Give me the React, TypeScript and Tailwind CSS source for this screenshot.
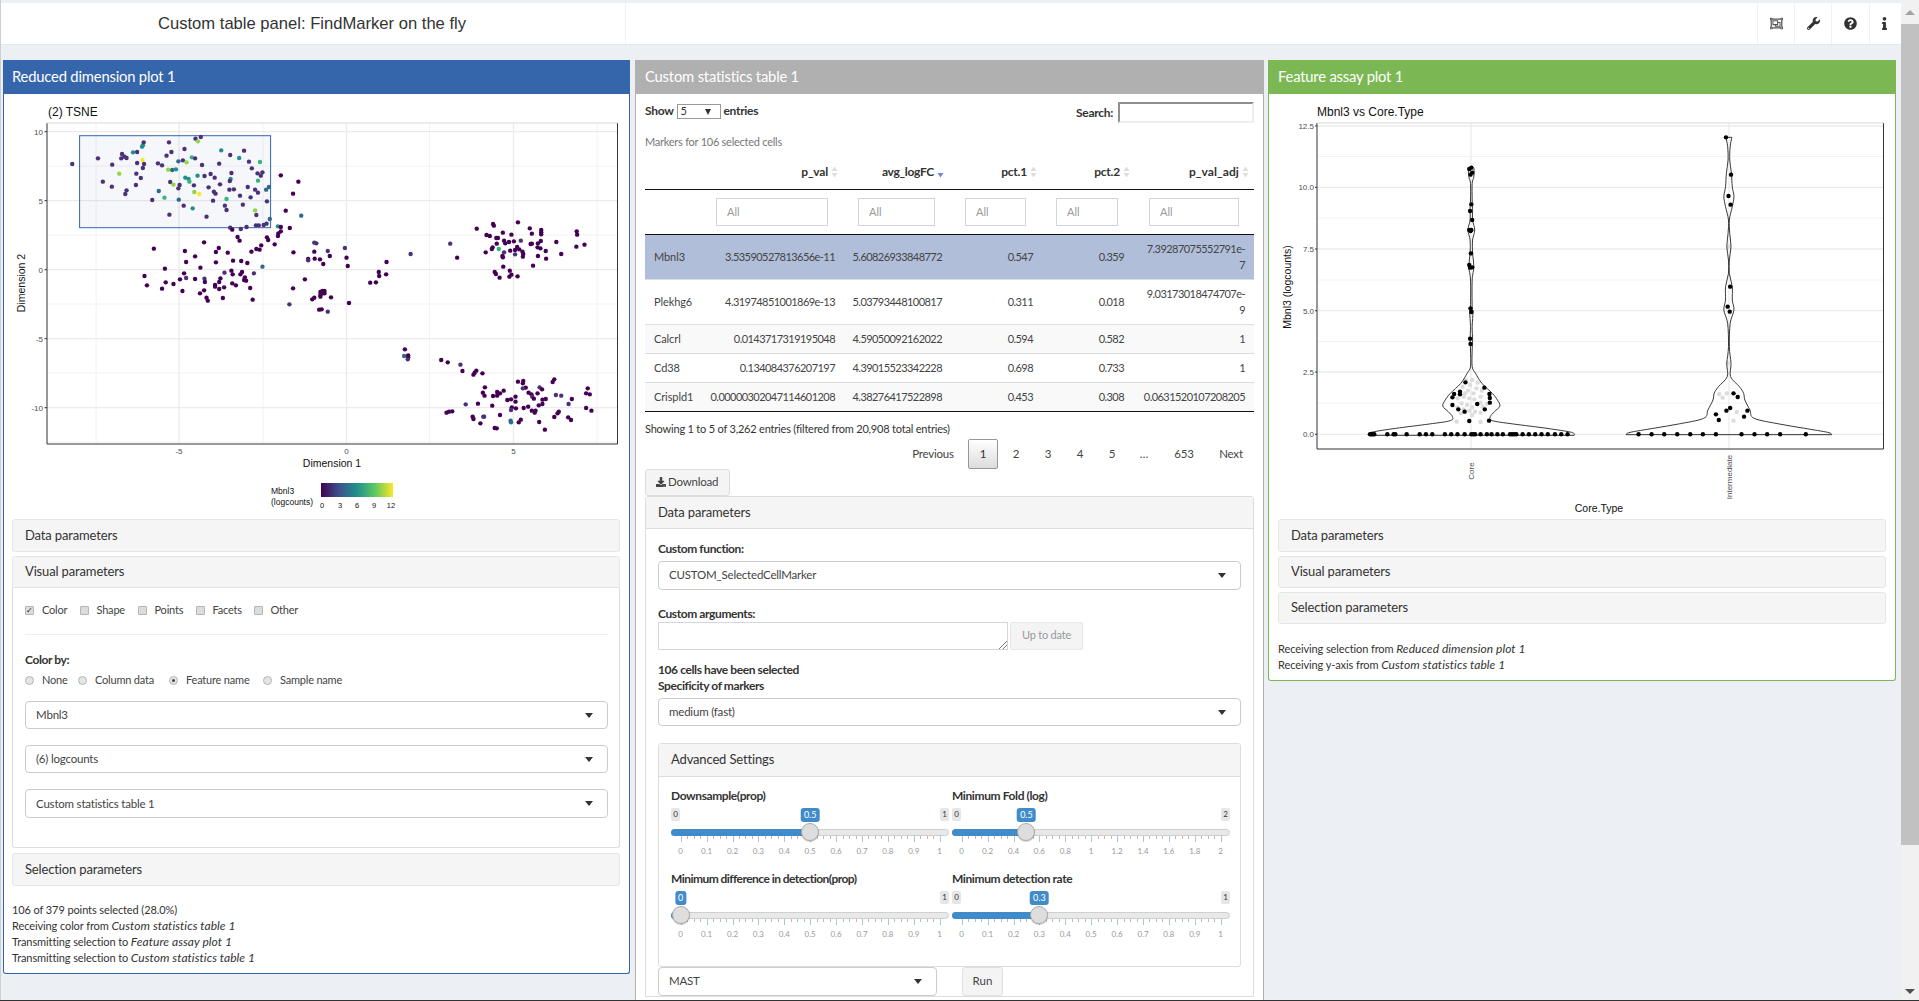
import { FaDownload, FaInfo, FaQuestionCircle, FaRegObjectGroup, FaWrench } from 'react-icons/fa';

const viridis = ['#440154', '#4b3178', '#31688e', '#21908c', '#35b779', '#90d743', '#fde725'];

// scatter points, as [x, y, colour index] read off the reference at 2.45x / 3x
const scatter: number[][] = [
  [177,492,1],[240,475,1],[275,494,1],[299,462,1],[297,475,1],[305,470,1],[310,474,1],[336,456,1],[326,457,3],[348,440,3],[350,436,3],[352,427,1],[336,489,1],[349,480,6],[353,492,1],[350,504,1],[292,521,5],[334,521,1],[345,534,1],[252,545,1],[274,560,1],[310,571,1],[307,582,1],[333,555,1],[373,600,1],[389,573,2],[403,593,4],[387,490,1],[397,496,1],[414,427,1],[408,467,1],[420,456,1],[452,447,1],[479,416,1],[492,411,1],[485,424,5],[437,484,2],[448,481,1],[457,487,5],[470,472,4],[478,475,1],[412,509,5],[422,510,2],[431,508,3],[495,495,1],[537,491,1],[542,451,3],[564,465,1],[586,474,3],[598,452,1],[610,485,1],[617,505,1],[637,486,4],[631,520,1],[643,517,1],[639,527,1],[632,542,4],[567,519,1],[565,537,3],[563,543,1],[516,522,1],[526,533,1],[501,528,1],[484,527,3],[454,533,3],[462,537,3],[464,545,4],[417,546,1],[425,554,5],[440,555,1],[437,565,1],[475,556,1],[511,562,1],[539,553,1],[562,569,1],[573,568,1],[607,561,1],[625,569,1],[632,578,1],[652,569,2],[659,561,2],[476,576,5],[488,582,6],[524,575,1],[528,581,1],[522,602,1],[555,597,4],[588,587,1],[614,592,1],[654,604,1],[438,599,2],[450,617,1],[472,625,3],[415,644,1],[506,650,1],[551,617,1],[555,630,1],[595,614,1],[625,631,5],[628,645,1],[627,676,1],[634,676,1],[646,675,1],[653,671,1],[661,657,2],[604,681,1],[564,683,1],[590,687,1],[681,679,3],
  [688,526,0],[731,545,0],[718,581,0],[700,632,0],[738,647,2],[688,681,0],[710,684,0],[569,689,0],[688,694,0],[682,700,0],[681,708,0],[654,712,0],[657,720,0],[582,711,0],[587,722,0],[500,727,0],[673,733,0],[640,736,0],[636,749,0],[628,747,0],[616,755,0],[536,744,0],[529,756,0],[558,758,0],[377,746,0],[453,753,0],[478,769,0],[456,786,0],[529,787,0],[571,782,0],[591,783,0],[606,789,0],[643,800,2],[491,803,0],[404,806,0],[451,820,0],[456,834,1],[441,838,0],[478,837,0],[501,836,1],[502,846,0],[540,835,0],[537,846,0],[527,855,0],[527,860,0],[537,867,0],[549,862,0],[567,812,0],[570,823,0],[550,818,1],[593,816,0],[589,823,0],[600,832,0],[603,842,0],[598,840,0],[622,820,1],[569,850,0],[578,856,0],[613,864,0],[354,828,0],[360,856,0],[397,866,0],[406,847,0],[425,852,0],[447,873,0],[490,880,0],[500,871,0],[506,893,0],[509,902,0],[546,894,0],[619,899,0],
  [719,757,0],[770,728,1],[775,730,1],[770,755,0],[755,777,0],[755,781,1],[771,776,0],[784,778,0],[792,792,0],[803,753,1],[808,768,0],[845,744,1],[849,773,0],[852,798,0],[747,838,0],[718,865,0],[709,913,1],[790,873,0],[795,873,0],[785,876,0],[790,880,0],[785,885,0],[795,880,0],[785,890,0],[770,893,0],[765,898,0],[811,892,0],[782,929,0],[788,928,0],[803,935,1],[855,909,0],[907,848,0],[921,847,0],[928,816,0],[929,828,0],[946,823,0],[947,786,0],[1006,762,1],[1103,731,1],[1120,773,0],
  [1168,686,0],[1208,672,0],[1210,677,0],[1269,667,0],[1298,685,0],[1326,690,0],[1326,697,0],[1326,703,0],[1303,701,0],[1232,698,0],[1253,704,0],[1192,705,0],[1200,708,0],[1216,714,0],[1220,714,0],[1413,694,0],[1414,704,0],[1363,726,0],[1432,734,0],[1412,740,0],[1375,762,0],[1190,757,0],[1205,747,0],[1207,742,0],[1217,731,0],[1222,747,4],[1235,722,0],[1238,730,0],[1247,726,0],[1259,724,0],[1276,722,1],[1300,732,0],[1303,731,0],[1318,730,0],[1325,723,0],[1317,742,0],[1324,745,0],[1337,753,0],[1235,757,1],[1250,752,0],[1262,750,0],[1267,741,0],[1272,748,0],[1280,755,0],[1282,762,0],[1281,770,0],[1262,763,1],[1231,768,0],[1232,772,0],[1318,768,0],[1338,776,0],[1306,797,0],[1233,800,0],[1249,812,0],[1212,816,0],[1215,822,0],[1224,833,0],[1253,824,0],[1248,830,0],[1268,829,0],
  [992,1048,0],[990,1068,2],[1000,1066,0],[1000,1072,0],[999,1078,1],[1081,1080,0],[1097,1087,0],[1128,1094,1],[1133,1113,0],[1167,1112,0],[1163,1118,0],[1160,1124,0],[1182,1120,0],[1188,1162,0],[1183,1178,0],[1187,1187,0],[1208,1188,0],[1218,1176,0],[1218,1187,0],[1225,1180,0],[1234,1172,0],[1269,1145,0],[1282,1143,0],[1281,1150,0],[1288,1163,0],[1281,1165,1],[1322,1162,1],[1328,1168,0],[1358,1138,0],[1354,1146,0],[1440,1165,0],[1436,1180,0],[1445,1183,0],[1295,1178,0],[1302,1183,0],[1304,1190,1],[1317,1180,0],[1308,1196,0],[1243,1200,0],[1252,1198,0],[1263,1190,0],[1263,1205,0],[1329,1199,0],[1337,1197,0],[1362,1185,1],[1375,1187,1],[1401,1197,0],[1393,1212,1],[1141,1213,1],[1171,1211,0],[1206,1217,0],[1254,1222,0],[1264,1225,0],[1252,1230,1],[1283,1224,0],[1294,1220,0],[1320,1216,0],[1329,1212,0],[1303,1232,0],[1312,1232,0],[1310,1238,0],[1436,1224,0],[1449,1232,0],[1094,1238,0],[1100,1235,0],[1108,1234,0],[1158,1250,0],[1160,1257,0],[1186,1250,1],[1184,1250,1],[1225,1245,0],[1251,1262,2],[1252,1267,2],[1271,1267,0],[1276,1259,0],[1321,1266,0],[1358,1251,0],[1366,1240,0],[1369,1235,0],[1392,1252,0],[1399,1260,0],[1177,1270,0],[1212,1284,0],[1217,1285,0],[1335,1289,0],
];

const coreShape = [[500,0],[505,6],[530,6],[550,2],[600,2],[625,3],[660,3],[690,8],[720,3],[760,3],[800,6],[840,2],[920,2],[935,4],[980,2],[1020,3],[1050,2],[1100,2],[1120,10],[1150,25],[1180,50],[1200,62],[1218,68],[1235,55],[1250,45],[1262,50],[1272,100],[1285,180],[1296,235],[1302,245],[1306,245]];
const interShape = [[412,7],[440,3],[480,2],[520,6],[560,8],[590,12],[620,8],[660,1],[700,2],[740,5],[780,1],[820,1],[860,8],[900,8],[930,12],[970,3],[1040,1],[1090,5],[1130,4],[1160,25],[1180,35],[1200,38],[1230,50],[1255,60],[1272,120],[1285,180],[1297,235],[1304,245]];

const coreDots = [[503,503],[498,507],[505,518],[501,524],[503,613],[500,633],[505,660],[498,690],[503,690],[501,693],[502,760],[498,795],[505,802],[500,803],[501,925],[503,936],[500,1016],[501,1032],[489,1147],[534,1163],[476,1175],[476,1183],[462,1182],[458,1192],[546,1182],[547,1194],[547,1208],[458,1215],[472,1228],[487,1235],[517,1212],[535,1228],[498,1263],[545,1262]];
const coreZeros = [262,265,268,272,303,318,322,349,380,395,410,440,455,470,487,503,508,512,525,540,551,565,578,595,600,605,610,625,640,655,670,685,702,717,732];
const coreLight = [[490,1140],[505,1140],[518,1148],[500,1155],[482,1160],[515,1165],[528,1172],[495,1172],[508,1180],[470,1195],[485,1190],[525,1190],[498,1195],[510,1198],[480,1210],[493,1215],[505,1222],[525,1208],[540,1212],[470,1222],[485,1228],[498,1232],[512,1235],[525,1238],[478,1240],[505,1245],[468,1265],[525,1266],[530,1220],[488,1180]];
const interDots = [[1109,412],[1121,524],[1115,588],[1120,614],[1119,860],[1113,920],[1118,935],[1127,1180],[1137,1191],[1160,1232],[1119,1224],[1110,1232],[1085,1243],[1152,1250],[1092,1260]];
const interZeros = [901,932,962,993,1024,1054,1085,1146,1177,1207,1238,1299];
const interLight = [[1093,1182],[1101,1193],[1111,1180],[1135,1236],[1127,1262],[1113,1090],[1116,740]];

// one side of the outline, smoothed with catmull-rom
const smoothSide = (pts: number[][]) => {
  let d = '';
  for (let i = 0; i < pts.length - 1; i++) {
    const p0 = pts[i - 1] || pts[i];
    const p1 = pts[i];
    const p2 = pts[i + 1];
    const p3 = pts[i + 2] || p2;
    d += `C${p1[0] + (p2[0] - p0[0]) / 6} ${p1[1] + (p2[1] - p0[1]) / 6} ${p2[0] - (p3[0] - p1[0]) / 6} ${p2[1] - (p3[1] - p1[1]) / 6} ${p2[0]} ${p2[1]}`;
  }
  return d;
};

const violinPath = (cx: number, rows: number[][]) => {
  const toPage = ([x, y]: number[]) => [1260 + x / 2.38, y / 3];
  const right = rows.map(([y, w]) => toPage([cx + w, y]));
  const left = [...rows].reverse().map(([y, w]) => toPage([cx - w, y]));
  return `M${right[0][0]} ${right[0][1]}${smoothSide(right)}L${left[0][0]} ${left[0][1]}${smoothSide(left)}Z`;
};

const ScatterPlot = () => {
  const xs = [179, 346.5, 513.5];
  const xMinor = [96, 263, 429.5, 597];
  const ys = [131.7, 200.7, 269.7, 338.7, 407.7];
  const yMinor = [166, 235, 304, 373, 442];
  return (
    <svg width={625} height={424} className="block font-['Liberation_Sans',sans-serif]">
      <defs>
        <linearGradient id="vir">
          <stop offset="0" stopColor="#440154" />
          <stop offset="0.25" stopColor="#3b528b" />
          <stop offset="0.5" stopColor="#21908c" />
          <stop offset="0.75" stopColor="#5dc963" />
          <stop offset="1" stopColor="#fde725" />
        </linearGradient>
      </defs>
      <g transform="translate(-4,-94)">
        <text x={48} y={116} fontSize={12} fill="#111">(2) TSNE</text>
        {xMinor.map(x => <line key={x} x1={x} x2={x} y1={123} y2={444} stroke="#f2f2f2" />)}
        {yMinor.map(y => <line key={y} x1={47} x2={617} y1={y} y2={y} stroke="#f2f2f2" />)}
        {xs.map(x => <line key={x} x1={x} x2={x} y1={123} y2={444} stroke="#ebebeb" strokeWidth={1.3} />)}
        {ys.map(y => <line key={y} x1={47} x2={617} y1={y} y2={y} stroke="#ebebeb" strokeWidth={1.3} />)}
        <path d="M47 123V444H617.5V123" fill="none" stroke="#333" strokeWidth={1} />
        <path d="M47 123H617.5" stroke="#d9d9d9" />
        {[[179, '-5'], [346.5, '0'], [513.5, '5']].map(([x, t]) => (
          <text key={t} x={x} y={454} fontSize={8} textAnchor="middle" fill="#4d4d4d">{t}</text>
        ))}
        {['10', '5', '0', '-5', '-10'].map((t, i) => (
          <g key={t}>
            <text x={43} y={ys[i] + 3} fontSize={8} textAnchor="end" fill="#4d4d4d">{t}</text>
            <line x1={44.5} x2={47} y1={ys[i]} y2={ys[i]} stroke="#333" />
          </g>
        ))}
        <text x={332} y={467} fontSize={10.5} textAnchor="middle" fill="#111">Dimension 1</text>
        <text transform="translate(25,283) rotate(-90)" fontSize={10.5} textAnchor="middle" fill="#111">Dimension 2</text>
        <rect x={79.6} y={135.7} width={191} height={92} fill="#3565aa" fillOpacity={0.05} stroke="#3565aa" strokeWidth={1} />
        {scatter.map(([x, y, c], i) => <circle key={i} cx={x / 2.45} cy={y / 3} r={2.2} fill={viridis[c]} />)}
        <text x={271} y={494} fontSize={8.5} fill="#111">Mbnl3</text>
        <text x={271} y={505} fontSize={8.5} fill="#111">(logcounts)</text>
        <rect x={321} y={483} width={72} height={14} fill="url(#vir)" />
        {[[322, '0'], [340, '3'], [357, '6'], [374, '9'], [391, '12']].map(([x, t]) => (
          <text key={t} x={x} y={508} fontSize={7.5} textAnchor="middle" fill="#111">{t}</text>
        ))}
      </g>
    </svg>
  );
};

const ViolinPlot = () => {
  const vx = (x: number) => 1260 + x / 2.38;
  const ys = [126, 187.3, 249, 310.7, 372, 434.3];
  const yMinor = [156.5, 218, 280, 341.5, 403];
  return (
    <svg width={626} height={424} className="block font-['Liberation_Sans',sans-serif]">
      <g transform="translate(-1269,-94)">
        <text x={1317} y={116} fontSize={12} fill="#111">Mbnl3 vs Core.Type</text>
        {yMinor.map(y => <line key={y} x1={1317} x2={1883} y1={y} y2={y} stroke="#f2f2f2" />)}
        {ys.map(y => <line key={y} x1={1317} x2={1883} y1={y} y2={y} stroke="#ebebeb" strokeWidth={1.3} />)}
        {[1471, 1729].map(x => <line key={x} x1={x} x2={x} y1={123} y2={449} stroke="#ebebeb" strokeWidth={1.3} />)}
        <path d="M1317 123V449H1883.5V123" fill="none" stroke="#333" />
        <path d="M1317 123H1883.5" stroke="#d9d9d9" />
        {['12.5', '10.0', '7.5', '5.0', '2.5', '0.0'].map((t, i) => (
          <g key={t}>
            <text x={1314} y={ys[i] + 3} fontSize={8} textAnchor="end" fill="#4d4d4d">{t}</text>
            <line x1={1315} x2={1317} y1={ys[i]} y2={ys[i]} stroke="#333" />
          </g>
        ))}
        {coreLight.concat(interLight).map(([x, y], i) => <circle key={i} cx={vx(x)} cy={y / 3} r={2.2} fill="#dcdcdc" />)}
        <path d={violinPath(503, coreShape)} fill="none" stroke="#222" strokeWidth={0.9} />
        <path d={violinPath(1116, interShape)} fill="none" stroke="#222" strokeWidth={0.9} />
        {coreDots.concat(interDots).map(([x, y], i) => <circle key={i} cx={vx(x)} cy={y / 3} r={2.2} fill="#000" />)}
        {coreZeros.concat(interZeros).map((x, i) => <circle key={i} cx={vx(x)} cy={434.3} r={2.2} fill="#000" />)}
        <text transform="translate(1474,471) rotate(-90)" fontSize={8} textAnchor="middle" fill="#4d4d4d">Core</text>
        <text transform="translate(1732,477) rotate(-90)" fontSize={8} textAnchor="middle" fill="#4d4d4d">Intermediate</text>
        <text x={1599} y={512} fontSize={10.5} textAnchor="middle" fill="#111">Core.Type</text>
        <text transform="translate(1291,287) rotate(-90)" fontSize={10.5} textAnchor="middle" fill="#111">Mbnl3 (logcounts)</text>
      </g>
    </svg>
  );
};

const Accordion = ({ title, className = '' }: { title: string; className?: string }) => (
  <div className={`flex items-center pl-[12px] bg-[#f5f5f5] border border-[#e6e6e6] rounded-[3px] text-[13px] text-[#333] tracking-[-0.15px] ${className}`}>
    {title}
  </div>
);

const SelectBox = ({ value, className = '' }: { value: string; className?: string }) => (
  <div className={`relative flex items-center pl-[10px] bg-white border border-[#ccc] rounded-[4px] text-[11.5px] text-[#444] tracking-[-0.2px] ${className}`}>
    {value}
    <span className="absolute right-[14px] top-[11px] w-0 h-0 border-l-[4px] border-r-[4px] border-t-[5px] border-l-transparent border-r-transparent border-t-[#333]" />
  </div>
);

const Check = ({ label, checked = false, className = '' }: { label: string; checked?: boolean; className?: string }) => (
  <div className={`flex items-center gap-[8px] text-[11px] text-[#444] tracking-[-0.2px] ${className}`}>
    <span className="flex items-center justify-center w-[9px] h-[9px] bg-[#dcdcdc] border border-[#b5b5b5] rounded-[1px] text-[8px] leading-none text-[#222]">
      {checked ? '✓' : ''}
    </span>
    {label}
  </div>
);

const Radio = ({ label, checked = false, className = '' }: { label: string; checked?: boolean; className?: string }) => (
  <div className={`flex items-center gap-[8px] text-[11px] text-[#444] tracking-[-0.2px] ${className}`}>
    <span className="flex items-center justify-center w-[9px] h-[9px] bg-[#e4e4e4] border border-[#b5b5b5] rounded-full">
      {checked ? <span className="w-[3px] h-[3px] rounded-full bg-[#444]" /> : null}
    </span>
    {label}
  </div>
);

const tdPad = [
  'pl-[9px] text-left tracking-[-0.1px]',
  'pr-[13px] text-right tracking-[-0.55px]',
  'pr-[13px] text-right tracking-[-0.55px]',
  'pr-[13px] text-right tracking-[-0.55px]',
  'pr-[15px] text-right tracking-[-0.55px]',
  'pr-[9px] text-right tracking-[-0.55px]',
];

const rows = [
  { h: 'h-[45px]', bg: 'bg-[#b0bed9]', c: ['Mbnl3', '3.53590527813656e-11', '5.60826933848772', '0.547', '0.359', '7.39287075552791e-\n7'] },
  { h: 'h-[45px]', bg: 'bg-white', c: ['Plekhg6', '4.31974851001869e-13', '5.03793448100817', '0.311', '0.018', '9.03173018474707e-\n9'] },
  { h: 'h-[29px]', bg: 'bg-[#f9f9f9]', c: ['Calcrl', '0.0143717319195048', '4.59050092162022', '0.594', '0.582', '1'] },
  { h: 'h-[29px]', bg: 'bg-white', c: ['Cd38', '0.134084376207197', '4.39015523342228', '0.698', '0.733', '1'] },
  { h: 'h-[29px]', bg: 'bg-[#f9f9f9]', c: ['Crispld1', '0.00000302047114601208', '4.38276417522898', '0.453', '0.308', '0.0631520107208205'] },
];

const SortIcon = ({ active = false }: { active?: boolean }) => (
  <svg width={7} height={12} viewBox="0 0 7 12" className="ml-[3px]">
    {active ? null : <path d="M3.5 0.5L6.5 5H0.5Z" fill="#dedede" />}
    <path d="M3.5 11.5L6.5 7H0.5Z" fill={active ? '#7a83d8' : '#dedede'} />
  </svg>
);

const StatsTable = () => {
  const heads = [
    { t: 'p_val', pr: 'pr-[10px] tracking-[-0.2px]' },
    { t: 'avg_logFC', pr: 'pr-[11px] tracking-[-0.3px]', active: true },
    { t: 'pct.1', pr: 'pr-[9px] tracking-[-0.2px]' },
    { t: 'pct.2', pr: 'pr-[9px] tracking-[-0.2px]' },
    { t: 'p_val_adj', pr: 'pr-[5px] tracking-[0.1px]' },
  ];
  const filters = ['w-[112px]', 'w-[77px]', 'w-[61px]', 'w-[62px]', 'w-[90px]'];
  return (
    <table className="w-[609px] table-fixed border-collapse text-[11px] text-[#444]">
      <colgroup>
        <col className="w-[61px]" />
        <col className="w-[142px]" />
        <col className="w-[107px]" />
        <col className="w-[91px]" />
        <col className="w-[93px]" />
        <col className="w-[115px]" />
      </colgroup>
      <thead>
        <tr className="h-[34px] border-b-[1.5px] border-[#111]">
          <th />
          {heads.map(h => (
            <th key={h.t} className={`font-bold text-[12px] text-[#333] ${h.pr}`}>
              <span className="flex items-center justify-end">
                {h.t}
                <SortIcon active={h.active} />
              </span>
            </th>
          ))}
        </tr>
        <tr className="h-[45px] border-b-[1.5px] border-[#111]">
          <td />
          {filters.map((w, i) => (
            <td key={i} className="pl-[10px]">
              <input
                placeholder="All"
                className={`${w} h-[28px] pl-[10px] border border-[#cfd5e0] bg-white text-[11px] placeholder:text-[#999] outline-none`}
              />
            </td>
          ))}
        </tr>
      </thead>
      <tbody>
        {rows.map((r, ri) => (
          <tr key={r.c[0]} className={`${r.h} ${r.bg} ${ri > 0 ? 'border-t border-[#ddd]' : ''} ${ri === 4 ? 'border-b-[1.5px] border-b-[#111]' : ''}`}>
            {r.c.map((v, i) => (
              <td key={i} className={`whitespace-pre-line leading-[16px] ${tdPad[i]}`}>{v}</td>
            ))}
          </tr>
        ))}
      </tbody>
    </table>
  );
};

const Pagination = () => {
  const items = [
    { t: 'Previous', w: 'w-[62px] mr-[4px]' },
    { t: '1', w: 'w-[30px] mr-[2px] border border-[#979797] rounded-[2px] bg-[linear-gradient(#fff,#dcdcdc)] text-[#333]' },
    { t: '2', w: 'w-[32px]' },
    { t: '3', w: 'w-[32px]' },
    { t: '4', w: 'w-[32px]' },
    { t: '5', w: 'w-[32px]' },
    { t: '…', w: 'w-[32px]' },
    { t: '653', w: 'w-[48px]' },
    { t: 'Next', w: 'w-[46px]' },
  ];
  return (
    <div className="flex justify-end h-[30px] mt-[2px] text-[11.5px] text-[#444] tracking-[-0.2px]">
      {items.map(i => <div key={i.t} className={`flex items-center justify-center ${i.w}`}>{i.t}</div>)}
    </div>
  );
};

const Slider = ({ value, max, labels, label, className = '' }: { value: number; max: number; labels: string[]; label: string; className?: string }) => {
  const from = 9.7;
  const span = 259;
  const pos = from + (value / max) * span;
  const ticks = Array.from({ length: (labels.length - 1) * 4 + 1 }, (_, i) => i);
  return (
    <div className={`relative h-[56px] w-[278px] ${className}`}>
      {value > 0 ? (
        <span className="absolute left-0 top-[2px] flex items-center justify-center w-[9px] h-[13px] bg-[#e6e6e6] rounded-[2px] text-[8px] text-[#333]">0</span>
      ) : null}
      <span className="absolute right-0 top-[2px] flex items-center justify-center w-[9px] h-[13px] bg-[#e6e6e6] rounded-[2px] text-[8px] text-[#333]">{max}</span>
      <div className="absolute left-0 right-0 top-[23px] h-[7px] bg-[#e8e8e8] border border-[#cfcfcf] rounded-[4px]" />
      <div className="absolute left-0 top-[23px] h-[7px] bg-[#428bca] rounded-l-[4px]" style={{ width: pos }} />
      {ticks.map(i => {
        const x = from + (i / (ticks.length - 1)) * span;
        const major = i % 4 === 0;
        return (
          <span
            key={i}
            className={major ? 'absolute top-[30px] w-px h-[6px] bg-[#a9c5de]' : 'absolute top-[30px] w-px h-[3px] bg-[#bbb]'}
            style={{ left: x }}
          />
        );
      })}
      {labels.map((t, i) => (
        <span
          key={i}
          className="absolute top-[40px] w-[20px] -ml-[10px] text-center text-[8px] leading-[10px] text-[#999]"
          style={{ left: from + i * 25.9 }}
        >
          {t}
        </span>
      ))}
      <span
        className="absolute top-[2px] -translate-x-1/2 flex items-center justify-center h-[14px] px-[3px] bg-[#428bca] rounded-[3px] text-[9px] text-white"
        style={{ left: pos }}
      >
        {label}
      </span>
      <span className="absolute top-[17px] w-[18px] h-[18px] -ml-[9px] rounded-full bg-[#dedede] border border-[#ababab] shadow-[0_1px_1px_rgba(0,0,0,0.2)]" style={{ left: pos }} />
    </div>
  );
};

const tenths = ['0', '0.1', '0.2', '0.3', '0.4', '0.5', '0.6', '0.7', '0.8', '0.9', '1'];
const fifths = ['0', '0.2', '0.4', '0.6', '0.8', '1', '1.2', '1.4', '1.6', '1.8', '2'];

const fieldLabel = 'h-[16px] leading-[16px] text-[12px] font-bold text-[#333] tracking-[-0.4px]';

const StatusLine = ({ lead, em }: { lead: string; em?: string }) => (
  <div>
    {lead}
    {em ? <em className="text-[12px] tracking-[0.05px]">{em}</em> : null}
  </div>
);

const LeftPanel = () => (
  <div className="w-[627px] h-[914px] bg-white border-x border-b border-[#3565aa] rounded-b-[3px] shrink-0">
    <div className="flex items-center h-[34px] -mx-px pl-[9px] pb-[2px] bg-[#3565aa] text-white text-[14.8px] tracking-[-0.2px]">Reduced dimension plot 1</div>
    <ScatterPlot />
    <div className="pl-[8px] pr-[9px]">
      <Accordion title="Data parameters" className="h-[33px] mt-px" />
      <div className="mt-[4px]">
        <Accordion title="Visual parameters" className="rounded-b-none h-[32px]" />
        <div className="h-[260px] border border-t-0 border-[#ddd] rounded-b-[3px] pl-[12px] pr-[11px]">
          <div className="flex items-center h-[44px]">
            <Check label="Color" checked className="w-[54.5px]" />
            <Check label="Shape" className="w-[58px]" />
            <Check label="Points" className="w-[58px]" />
            <Check label="Facets" className="w-[58px]" />
            <Check label="Other" />
          </div>
          <hr className="mt-[2px] border-[#eee]" />
          <div className={`mt-[17px] ${fieldLabel}`}>Color by:</div>
          <div className="flex items-center h-[18px] mt-[3px]">
            <Radio label="None" className="w-[53px]" />
            <Radio label="Column data" className="w-[91px]" />
            <Radio label="Feature name" checked className="w-[94px]" />
            <Radio label="Sample name" />
          </div>
          <SelectBox value="Mbnl3" className="mt-[12px] h-[28px]" />
          <SelectBox value="(6) logcounts" className="mt-[16px] h-[28px]" />
          <SelectBox value="Custom statistics table 1" className="mt-[16px] h-[29px]" />
        </div>
      </div>
      <Accordion title="Selection parameters" className="mt-[5px] h-[33px]" />
      <div className="mt-[16px] text-[11px] leading-[16px] text-[#333] tracking-[-0.1px]">
        <StatusLine lead="106 of 379 points selected (28.0%)" />
        <StatusLine lead="Receiving color from " em="Custom statistics table 1" />
        <StatusLine lead="Transmitting selection to " em="Feature assay plot 1" />
        <StatusLine lead="Transmitting selection to " em="Custom statistics table 1" />
      </div>
    </div>
  </div>
);

const MiddlePanel = () => (
  <div className="w-[629px] h-[1000px] bg-white border-x border-[#b0b0b0] shrink-0">
    <div className="flex items-center h-[34px] -mx-px pl-[10px] pb-[2px] bg-[#b0b0b0] text-white text-[14.8px] tracking-[-0.2px]">Custom statistics table 1</div>
    <div className="px-[9px]">
      <div className="flex justify-between items-start pt-[8px] h-[29px] text-[12px] font-bold text-[#333] tracking-[-0.3px]">
        <div className="flex items-center gap-[3px] h-[16px] mt-px">
          Show
          <span className="relative flex items-center w-[44px] h-[15px] pl-[3px] border border-[#999] font-normal text-[11px]">
            5
            <span className="absolute right-[9px] top-[4px] w-0 h-0 border-l-[3px] border-r-[3px] border-t-[6px] border-l-transparent border-r-transparent border-t-[#333]" />
          </span>
          entries
        </div>
        <div className="flex items-center gap-[5px]">
          Search:
          <input className="w-[136px] h-[21px] border-2 border-[#eee] border-t-[#8f8f8f] border-l-[#8f8f8f] outline-none" />
        </div>
      </div>
      <div className="mt-[11px] h-[16px] leading-[16px] text-[11px] text-[#777] tracking-[-0.25px]">Markers for 106 selected cells</div>
      <div className="mt-[5px]"><StatsTable /></div>
      <div className="mt-[9px] h-[16px] leading-[16px] text-[11px] text-[#333] tracking-[-0.2px]">Showing 1 to 5 of 3,262 entries (filtered from 20,908 total entries)</div>
      <Pagination />
      <div className="flex items-center gap-[2px] w-[85px] h-[27px] pl-[10px] bg-[#f4f4f4] border border-[#ddd] rounded-[3px] text-[11.5px] text-[#444] tracking-[-0.2px]">
        <FaDownload className="text-[10px]" />
        Download
      </div>
      <div className="border border-[#ddd] rounded-t-[3px]">
        <div className="flex items-center h-[32px] pl-[12px] pt-[1px] bg-[#f5f5f5] border-b border-[#ddd] text-[13px] text-[#333] tracking-[-0.15px]">Data parameters</div>
        <div className="px-[12px]">
          <div className={`mt-[12px] ${fieldLabel}`}>Custom function:</div>
          <SelectBox value="CUSTOM_SelectedCellMarker" className="mt-[4px] h-[29px]" />
          <div className={`mt-[16px] ${fieldLabel}`}>Custom arguments:</div>
          <div className="flex gap-[2px]">
            <div className="relative w-[350px] h-[28px] border border-[#d2d6de]">
              <svg width={9} height={9} className="absolute right-0 bottom-0"><path d="M1 9L9 1M5 9L9 5" stroke="#777" /></svg>
            </div>
            <div className="flex items-center justify-center w-[73px] h-[28px] bg-[#f4f4f4] border border-[#e7e7e7] rounded-[2px] text-[11px] text-[#999] tracking-[-0.2px]">Up to date</div>
          </div>
          <div className="mt-[12px] text-[12px] font-bold leading-[16px] text-[#333] tracking-[-0.4px]">
            <div>106 cells have been selected</div>
            <div>Specificity of markers</div>
          </div>
          <SelectBox value="medium (fast)" className="mt-[4px] h-[28px]" />
          <div className="mt-[17px] h-[224px] border border-[#ddd] rounded-[3px]">
            <div className="flex items-center h-[33px] pl-[12px] pt-[1px] bg-[#f5f5f5] border-b border-[#ddd] text-[13px] text-[#333] tracking-[-0.15px]">Advanced Settings</div>
            <div className="grid grid-cols-[281px_278px] pl-[12px]">
              <div>
                <div className={`mt-[11px] ${fieldLabel}`}>Downsample(prop)</div>
                <Slider value={0.5} max={1} labels={tenths} label="0.5" className="mt-[2px]" />
                <div className={`mt-[9px] ${fieldLabel} tracking-[-0.55px]`}>Minimum difference in detection(prop)</div>
                <Slider value={0} max={1} labels={tenths} label="0" className="mt-[2px]" />
              </div>
              <div>
                <div className={`mt-[11px] ${fieldLabel}`}>Minimum Fold (log)</div>
                <Slider value={0.5} max={2} labels={fifths} label="0.5" className="mt-[2px]" />
                <div className={`mt-[9px] ${fieldLabel}`}>Minimum detection rate</div>
                <Slider value={0.3} max={1} labels={tenths} label="0.3" className="mt-[2px]" />
              </div>
            </div>
          </div>
          <div className="flex items-start">
            <SelectBox value="MAST" className="w-[279px] h-[29px]" />
            <div className="flex items-center justify-center w-[41px] h-[29px] ml-[25px] bg-[#f4f4f4] border border-[#e0e0e0] rounded-[3px] text-[11.5px] text-[#444]">Run</div>
          </div>
        </div>
      </div>
    </div>
  </div>
);

const RightPanel = () => (
  <div className="w-[628px] h-[621px] bg-white border-x border-b border-[#7bb854] rounded-b-[3px] shrink-0">
    <div className="flex items-center h-[34px] -mx-px pl-[10px] pb-[2px] bg-[#7bb854] text-white text-[14.8px] tracking-[-0.2px]">Feature assay plot 1</div>
    <ViolinPlot />
    <div className="px-[9px]">
      <Accordion title="Data parameters" className="h-[33px] mt-px" />
      <Accordion title="Visual parameters" className="mt-[4px] h-[32px]" />
      <Accordion title="Selection parameters" className="mt-[4px] h-[32px]" />
      <div className="mt-[17px] text-[11px] leading-[16px] text-[#333] tracking-[-0.1px]">
        <StatusLine lead="Receiving selection from " em="Reduced dimension plot 1" />
        <StatusLine lead="Receiving y-axis from " em="Custom statistics table 1" />
      </div>
    </div>
  </div>
);

const Header = () => {
  const icons = [
    { w: 'w-[37px]', i: <FaRegObjectGroup className="text-[13px] text-[#555]" /> },
    { w: 'w-[37px]', i: <FaWrench className="text-[13px] text-[#333]" /> },
    { w: 'w-[38px]', i: <FaQuestionCircle className="text-[13px] text-[#333]" /> },
    { w: 'w-[30px]', i: <FaInfo className="text-[13px] text-[#333]" /> },
  ];
  return (
    <div className="flex h-[42px] mt-[3px] bg-white border-b border-[#e3e6ea]">
      <div className="flex items-center w-[625px] pl-[157px] pt-px border-r border-[#f1f1f1] font-['Liberation_Sans',sans-serif] text-[16.6px] text-[#333]">
        Custom table panel: FindMarker on the fly
      </div>
      <div className="flex-1" />
      <div className="flex mr-[2px]">
        {icons.map((c, i) => (
          <div key={i} className={`flex items-center justify-center border-l border-[#f1f1f1] ${c.w}`}>{c.i}</div>
        ))}
      </div>
    </div>
  );
};

const Scrollbar = () => (
  <div className="flex flex-col items-center w-[18px] h-full bg-[#f1f1f1]">
    <div className="flex items-center justify-center h-[24px] w-full">
      <span className="w-0 h-0 border-l-[5px] border-r-[5px] border-b-[5px] border-l-transparent border-r-transparent border-b-[#a3a3a3]" />
    </div>
    <div className="w-full h-[821px] bg-[#c1c1c1]" />
    <div className="flex-1" />
    <div className="flex items-center justify-center h-[17px] w-full">
      <span className="w-0 h-0 border-l-[5px] border-r-[5px] border-t-[5px] border-l-transparent border-r-transparent border-t-[#505050]" />
    </div>
  </div>
);

export default function App() {
  return (
    <div className="flex flex-col w-[1919px] h-[1001px] overflow-hidden bg-[#ecf0f5] font-[Lato,sans-serif]">
      <div className="flex h-[1000px] overflow-hidden">
        <div className="w-[1901px] border-l border-[#cfcfcf]">
          <Header />
          <div className="flex items-start gap-[5px] pt-[15px] pl-[2px]">
            <LeftPanel />
            <MiddlePanel />
            <div className="-ml-px"><RightPanel /></div>
          </div>
        </div>
        <Scrollbar />
      </div>
      <div className="h-px bg-[#333]" />
    </div>
  );
}
